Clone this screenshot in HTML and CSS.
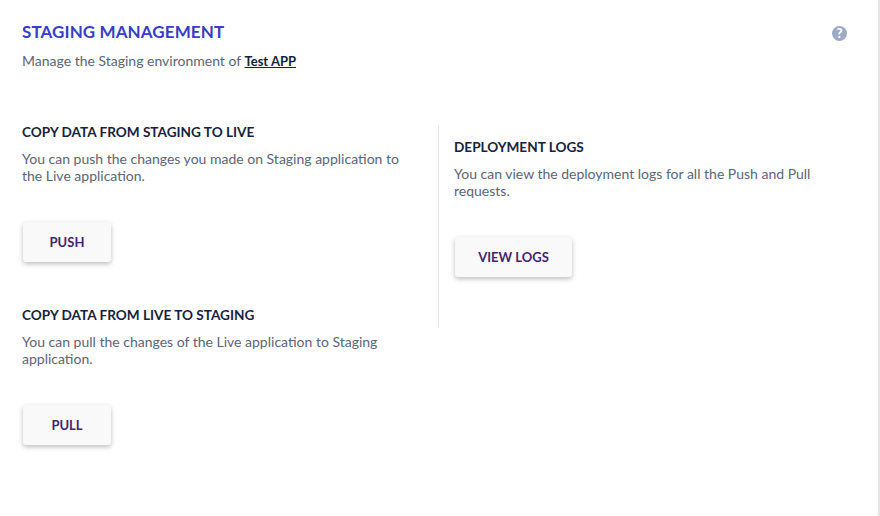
FILE: index.html
```html
<!DOCTYPE html>
<html lang="en">
<head>
<meta charset="utf-8">
<title>Staging Management</title>
<link rel="stylesheet" href="styles.css">
</head>
<body>
<main class="page">
  <header class="header">
    <div>
      <h1 class="title">STAGING MANAGEMENT</h1>
      <p class="subtitle">Manage the Staging environment of <a class="app-link" href="#">Test APP</a></p>
    </div>
    <span class="help">?</span>
  </header>
  <div class="columns">
    <div class="col-left">
      <section class="block">
        <h2 class="block-title">COPY DATA FROM STAGING TO LIVE</h2>
        <p class="block-text">You can push the changes you made on Staging application to the Live application.</p>
        <button class="btn btn-narrow">PUSH</button>
      </section>
      <section class="block">
        <h2 class="block-title">COPY DATA FROM LIVE TO STAGING</h2>
        <p class="block-text">You can pull the changes of the Live application to Staging application.</p>
        <button class="btn btn-narrow">PULL</button>
      </section>
    </div>
    <div class="col-right">
      <section class="block">
        <h2 class="block-title">DEPLOYMENT LOGS</h2>
        <p class="block-text">You can view the deployment logs for all the Push and Pull requests.</p>
        <button class="btn btn-wide">VIEW LOGS</button>
      </section>
    </div>
  </div>
</main>
</body>
</html>
```
FILE: styles.css
```css
* { box-sizing: border-box; }
html, body { margin: 0; height: 100%; background: #fff; }
body { font-family: "Lato", "Liberation Sans", sans-serif; overflow: hidden; }
.page {
  height: 516px;
  padding: 22px 31px 0 22px;
  border-right: 2px solid #e6e6e6;
}
.header { display: flex; justify-content: space-between; align-items: flex-start; }
.title {
  margin: 0;
  font-size: 17px;
  line-height: 20px;
  letter-spacing: .1px;
  font-weight: 700;
  color: #383cc6;
}
.subtitle {
  margin: 10px 0 0;
  font-size: 14px;
  line-height: 18px;
  color: #5a6578;
}
.app-link { color: #14233c; font-weight: 700; font-size: 13px; text-decoration: underline; }
.help {
  width: 15px;
  height: 15px;
  margin-top: 4px;
  border-radius: 50%;
  background: #9daac6;
  color: #fff;
  font-size: 13px;
  line-height: 15px;
  font-weight: 900;
  text-align: center;
}
.columns { display: flex; align-items: flex-start; margin-top: 52px; }
.col-left { flex: 0 0 416px; padding-right: 12px; }
.col-right {
  flex: 1;
  margin-top: 3px;
  height: 203px;
  padding: 12px 0 0 15px;
  border-left: 1px solid #e6e6e6;
}
.block { margin-bottom: 43px; }
.block-title {
  margin: 0 0 8px;
  font-size: 13.6px;
  line-height: 20px;
  font-weight: 700;
  color: #14233c;
}
.block-text {
  margin: 0;
  max-width: 394px;
  font-size: 14px;
  line-height: 17px;
  color: #5a6578;
}
.col-right .block-text { max-width: none; }
.btn {
  display: block;
  height: 40px;
  margin: 38px 0 0 1px;
  padding: 0;
  border: 0;
  border-radius: 3px;
  background: #f9f9f9;
  box-shadow: 0 2px 5px rgba(0, 0, 0, .26);
  font-family: inherit;
  font-size: 13px;
  font-weight: 700;
  color: #451f73;
}
.btn-narrow { width: 88px; }
.btn-wide { width: 117px; }
```
